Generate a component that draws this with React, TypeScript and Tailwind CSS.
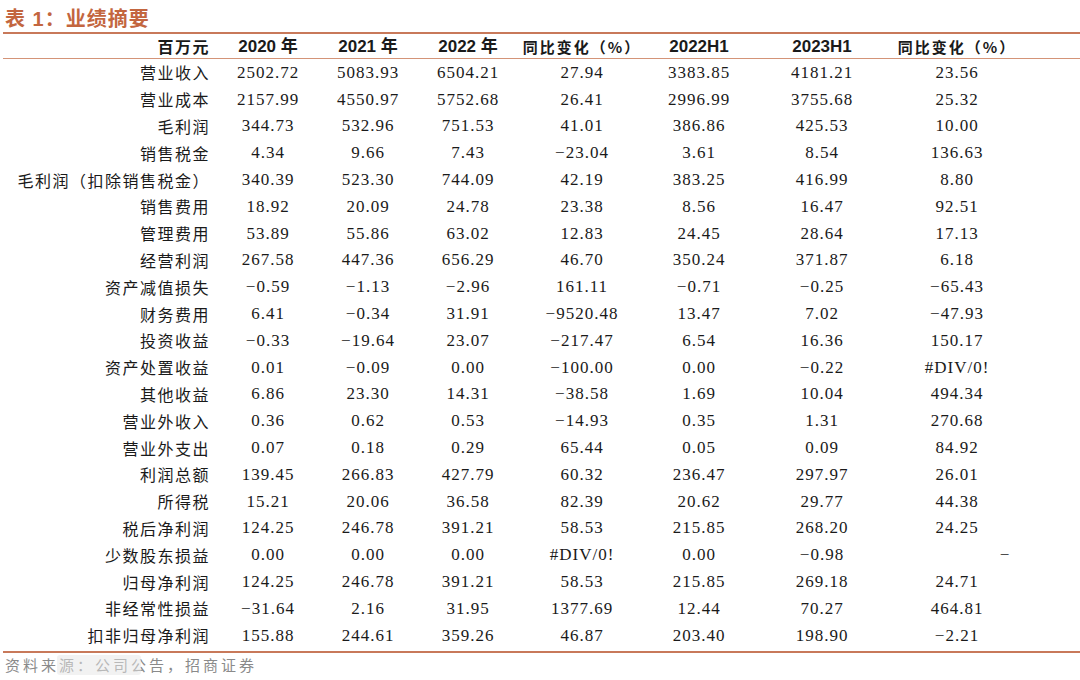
import React from "react";

const rows: string[][] = [
  ["营业收入", "2502.72", "5083.93", "6504.21", "27.94", "3383.85", "4181.21", "23.56"],
  ["营业成本", "2157.99", "4550.97", "5752.68", "26.41", "2996.99", "3755.68", "25.32"],
  ["毛利润", "344.73", "532.96", "751.53", "41.01", "386.86", "425.53", "10.00"],
  ["销售税金", "4.34", "9.66", "7.43", "−23.04", "3.61", "8.54", "136.63"],
  ["毛利润（扣除销售税金）", "340.39", "523.30", "744.09", "42.19", "383.25", "416.99", "8.80"],
  ["销售费用", "18.92", "20.09", "24.78", "23.38", "8.56", "16.47", "92.51"],
  ["管理费用", "53.89", "55.86", "63.02", "12.83", "24.45", "28.64", "17.13"],
  ["经营利润", "267.58", "447.36", "656.29", "46.70", "350.24", "371.87", "6.18"],
  ["资产减值损失", "−0.59", "−1.13", "−2.96", "161.11", "−0.71", "−0.25", "−65.43"],
  ["财务费用", "6.41", "−0.34", "31.91", "−9520.48", "13.47", "7.02", "−47.93"],
  ["投资收益", "−0.33", "−19.64", "23.07", "−217.47", "6.54", "16.36", "150.17"],
  ["资产处置收益", "0.01", "−0.09", "0.00", "−100.00", "0.00", "−0.22", "#DIV/0!"],
  ["其他收益", "6.86", "23.30", "14.31", "−38.58", "1.69", "10.04", "494.34"],
  ["营业外收入", "0.36", "0.62", "0.53", "−14.93", "0.35", "1.31", "270.68"],
  ["营业外支出", "0.07", "0.18", "0.29", "65.44", "0.05", "0.09", "84.92"],
  ["利润总额", "139.45", "266.83", "427.79", "60.32", "236.47", "297.97", "26.01"],
  ["所得税", "15.21", "20.06", "36.58", "82.39", "20.62", "29.77", "44.38"],
  ["税后净利润", "124.25", "246.78", "391.21", "58.53", "215.85", "268.20", "24.25"],
  ["少数股东损益", "0.00", "0.00", "0.00", "#DIV/0!", "0.00", "−0.98", "−"],
  ["归母净利润", "124.25", "246.78", "391.21", "58.53", "215.85", "269.18", "24.71"],
  ["非经常性损益", "−31.64", "2.16", "31.95", "1377.69", "12.44", "70.27", "464.81"],
  ["扣非归母净利润", "155.88", "244.61", "359.26", "46.87", "203.40", "198.90", "−2.21"],
];

const grid =
  "grid grid-cols-[215px_100px_100px_100px_128px_106px_140px_130px_1fr] items-center";
const cjk = "font-['Noto_Sans_CJK_SC',sans-serif]";
const num = "font-['Liberation_Serif','Noto_Sans_CJK_SC',serif]";
const bold = "font-['Liberation_Sans','Noto_Sans_CJK_SC',sans-serif]";

export default function App() {
  return (
    <div className="w-[1080px] h-[680px] bg-white overflow-hidden pl-[3px] text-[#1a1a1a]">
      <div className="h-[32px] flex items-end pl-[2px] pb-[3px]">
        <span
          className={`${bold} text-[20px] font-bold text-[#c3663f] leading-none tracking-[1px]`}
        >
          表 1：业绩摘要
        </span>
      </div>
      <div className="h-[2px] bg-[#c8795a]" />
      <div className={`${grid} h-[24px]`}>
        <div className={`${cjk} text-right pr-[8px] text-[16px] font-bold tracking-[1.5px] leading-none`}>
          百万元
        </div>
        <div className={`${bold} text-center text-[17px] font-bold leading-none`}>2020 年</div>
        <div className={`${bold} text-center text-[17px] font-bold leading-none`}>2021 年</div>
        <div className={`${bold} text-center text-[17px] font-bold leading-none`}>2022 年</div>
        <div className={`${cjk} text-center text-[15px] font-bold tracking-[2px] leading-none`}>
          同比变化（%）
        </div>
        <div className={`${bold} text-center text-[17px] font-bold leading-none`}>2022H1</div>
        <div className={`${bold} text-center text-[17px] font-bold leading-none`}>2023H1</div>
        <div className={`${cjk} text-center text-[15px] font-bold tracking-[2px] leading-none`}>
          同比变化（%）
        </div>
        <div />
      </div>
      <div className="h-px bg-[#d49478]" />
      <div>
        {rows.map((r, i) => (
          <div key={i} className={`${grid} h-[26.8px]`}>
            <div
              className={`${cjk} text-right pr-[8px] text-[16px] tracking-[1.5px] leading-none whitespace-nowrap`}
            >
              {r[0]}
            </div>
            {r.slice(1).map((v, j) => (
              <div
                key={j}
                className={`${num} text-center text-[17px] tracking-[1px] leading-none ${
                  v === "−" ? "pl-[96px]" : ""
                }`}
              >
                {v}
              </div>
            ))}
            <div />
          </div>
        ))}
      </div>
      <div className="h-[2px]" />
      <div className="h-[2px] bg-[#c8795a]" />
      <div className="relative h-[24px] flex items-center pl-[2px]">
        <span className={`${cjk} text-[15px] text-[#8a8a8a] tracking-[3px] leading-none`}>
          资料来源：公司公告，招商证券
        </span>
        <span
          aria-hidden="true"
          className="absolute left-[54px] top-[2px] h-[20px] w-[84px] rounded-[3px] bg-[#e6e6e6]/50"
        />
      </div>
    </div>
  );
}
